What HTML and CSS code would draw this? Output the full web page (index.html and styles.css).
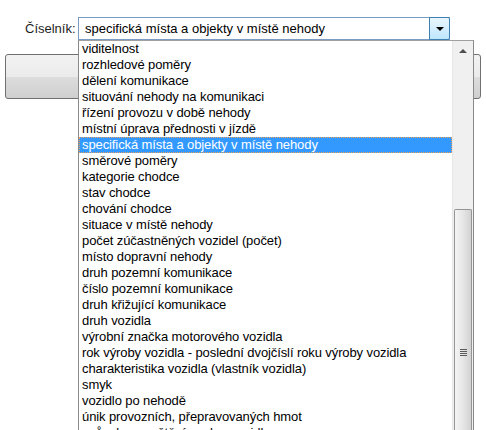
FILE: index.html
```html
<!DOCTYPE html>
<html lang="cs">
<head>
  <meta charset="UTF-8">
  <title>Číselník</title>
  <link rel="stylesheet" href="styles.css">
</head>
<body>
  <div class="page">
    <div class="row">
      <label class="lbl">Číselník:</label>
      <div class="select">
        <span class="value">specifická místa a objekty v místě nehody</span>
        <span class="arrow"><i></i></span>
      </div>
    </div>
    <div class="btn"></div>

    <div class="dropdown">
      <ul class="items">
        <li>viditelnost</li>
        <li>rozhledové poměry</li>
        <li>dělení komunikace</li>
        <li>situování nehody na komunikaci</li>
        <li>řízení provozu v době nehody</li>
        <li>místní úprava přednosti v jízdě</li>
        <li class="sel">specifická místa a objekty v místě nehody</li>
        <li>směrové poměry</li>
        <li>kategorie chodce</li>
        <li>stav chodce</li>
        <li>chování chodce</li>
        <li>situace v místě nehody</li>
        <li>počet zúčastněných vozidel (počet)</li>
        <li>místo dopravní nehody</li>
        <li>druh pozemní komunikace</li>
        <li>číslo pozemní komunikace</li>
        <li>druh křižující komunikace</li>
        <li>druh vozidla</li>
        <li>výrobní značka motorového vozidla</li>
        <li>rok výroby vozidla - poslední dvojčíslí roku výroby vozidla</li>
        <li>charakteristika vozidla (vlastník vozidla)</li>
        <li>smyk</li>
        <li>vozidlo po nehodě</li>
        <li>únik provozních, přepravovaných hmot</li>
        <li>způsob vyproštění osob z vozidla</li>
      </ul>
      <div class="scroll">
        <div class="up"><i></i></div>
        <div class="track"></div>
        <div class="thumb"><span class="grip"></span></div>
      </div>
    </div>
  </div>
</body>
</html>
```

FILE: styles.css
```css
*{margin: 0; padding: 0; box-sizing: border-box;}
html, body{height: 100%; overflow: hidden; background: #fff;}
body{font-family: "Liberation Sans", Arial, sans-serif; font-size: 13px; color: #000;}
.page{position: relative; height: 430px; overflow: hidden;}

.row{display: flex; align-items: center; padding-top: 17px; padding-left: 25px;}
.lbl{width: 53px; color: #1e1e1e;}
.select{display: flex; width: 372px; height: 23px; border: 1px solid #7a9cc4; border-right: 0; background: #fff;}
.select .value{flex: 1; padding-left: 6px; line-height: 21px;}
.select .arrow{width: 21px; height: 23px; margin-top: -1px; border: 1px solid #3c7fb1; border-radius: 0 2px 2px 0; background: linear-gradient(#eaf6fd, #bee6fd); display: flex; align-items: center; justify-content: center;}
.select .arrow i{width: 0; height: 0; border-left: 4px solid transparent; border-right: 4px solid transparent; border-top: 4px solid #000;}

.btn{margin: 14px 0 0 5px; width: 476px; height: 45px; border: 1px solid #707070; border-radius: 3px; background: linear-gradient(#f2f2f2 0%, #ebebeb 50%, #dddddd 50%, #cfcfcf 100%);}

.dropdown{position: absolute; left: 78px; top: 40px; width: 396px; height: 390px; border: 1px solid #8a8a8a; border-top-color: #a0a0a0; border-bottom: 0; background: #fff; display: flex; overflow: hidden;}
.items{list-style: none; flex: 1; letter-spacing: -0.1px;}
.items li{height: 16px; line-height: 16px; padding-left: 3px; white-space: nowrap; overflow: hidden;}
.items li.sel{background: #3399ff; color: #fff; outline: 1px dotted #e8a060; outline-offset: -1px;}

.scroll{width: 21px; background: #f0f0f0; border-left: 1px solid #e6e6e6; display: flex; flex-direction: column; align-items: center;}
.scroll .up{height: 19px; width: 100%; display: flex; align-items: center; justify-content: center;}
.scroll .up i{width: 0; height: 0; border-left: 4px solid transparent; border-right: 4px solid transparent; border-bottom: 4px solid #4d4d4d;}
.scroll .track{height: 149px;}
.scroll .thumb{width: 18px; flex: 1; border: 1px solid #959595; border-bottom: 0; border-radius: 2px 2px 0 0; background: linear-gradient(to right, #f4f4f4, #e6e6e6 50%, #d2d2d2); display: flex; justify-content: center; padding-top: 139px;}
.scroll .grip{width: 7px; height: 7px; background: repeating-linear-gradient(#5a5a5a 0 1px, transparent 1px 2px);}
```
